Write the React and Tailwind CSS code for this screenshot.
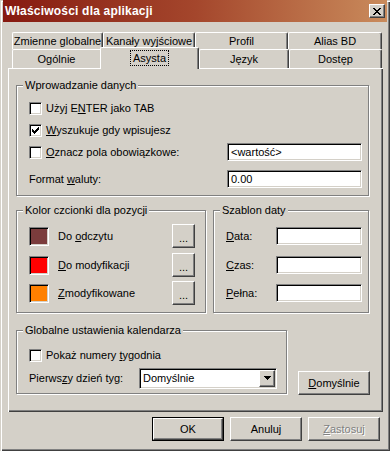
import React from 'react';

const raised =
  'border border-t-white border-l-white border-r-[#404040] border-b-[#404040] shadow-[inset_-1px_-1px_0_#808080]';
const sunken =
  'border border-t-[#808080] border-l-[#808080] border-r-white border-b-white shadow-[inset_1px_1px_0_#000,inset_-1px_-1px_0_#d4d0c8]';

function Check({ checked }) {
  return (
    <span className={`flex h-[13px] w-[13px] shrink-0 items-center justify-center bg-white ${sunken}`}>
      {checked && (
        <svg width="7" height="7" viewBox="0 0 7 7" shapeRendering="crispEdges">
          {[2, 3, 4, 3, 2, 1, 0].map((y, x) => (
            <rect key={x} x={x} y={y} width="1" height="3" fill="#000" />
          ))}
        </svg>
      )}
    </span>
  );
}

function Field({ className = '', children }) {
  return <div className={`flex items-center bg-white pl-[3px] ${sunken} ${className}`}>{children}</div>;
}

function Group({ title, className = '', children }) {
  return (
    <div className={`relative border border-[#808080] shadow-[inset_1px_1px_0_#fff,1px_1px_0_#fff] ${className}`}>
      <span className="absolute -top-[7px] left-[6px] bg-[#d4d0c8] px-[2px] leading-[13px]">{title}</span>
      {children}
    </div>
  );
}

function Button({ className = '', children }) {
  return <div className={`flex items-center justify-center bg-[#d4d0c8] ${raised} ${className}`}>{children}</div>;
}

function TitleBar() {
  return (
    <div className="flex h-[22px] shrink-0 items-center bg-linear-to-r from-[#861810] via-[#a4462c] to-[#c98b5c] pl-[2px] pr-[2px]">
      <span className="text-[12px] font-bold tracking-[0.2px] text-white">Właściwości dla aplikacji</span>
      <Button className="ml-auto h-[14px] w-[16px]">
        <svg width="8" height="7" viewBox="0 0 8 7" shapeRendering="crispEdges">
          {[0, 1, 2, 3, 2, 1, 0].map((v, r) => (
            <g key={r}>
              <rect x={v} y={r} width="2" height="1" fill="#000" />
              <rect x={6 - v} y={r} width="2" height="1" fill="#000" />
            </g>
          ))}
        </svg>
      </Button>
    </div>
  );
}

const tabBase =
  'flex items-center justify-center border-t border-l border-r border-t-white border-l-white border-r-[#404040] shadow-[inset_-1px_0_0_#808080] rounded-t-[2px]';

const backRow = [
  { label: 'Zmienne globalne', w: 'w-[91px]' },
  { label: 'Kanały wyjściowe', w: 'w-[92px]' },
  { label: 'Profil', w: 'w-[93px]' },
  { label: 'Alias BD', w: 'w-[94px]' },
];

function Tabs() {
  return (
    <div className="ml-[4px]">
      <div className="flex">
        {backRow.map((t) => (
          <div key={t.label} className={`h-[17px] ${t.w} ${tabBase}`}>
            {t.label}
          </div>
        ))}
      </div>
      <div className="flex h-[19px] items-start">
        <div className="flex h-[19px] w-[88px] items-center justify-center border-t border-l border-t-white border-l-white rounded-tl-[2px]">
          Ogólnie
        </div>
        <div className={`relative z-10 -mt-[2px] h-[22px] w-[99px] bg-[#d4d0c8] pb-[2px] ${tabBase}`}>
          <span className="border border-dotted border-black px-[2px] py-[1px] leading-[12px]">Asysta</span>
        </div>
        <div className={`h-[19px] w-[90px] ${tabBase}`}>Język</div>
        <div className={`h-[19px] w-[93px] ${tabBase}`}>Dostęp</div>
      </div>
    </div>
  );
}

const colours = [
  { label: <>Do <u>o</u>dczytu</>, bg: 'bg-[#7b3c3c]', mt: 'mt-0' },
  { label: <><u>D</u>o modyfikacji</>, bg: 'bg-[#ff0000]', mt: 'mt-[5px]' },
  { label: <><u>Z</u>modyfikowane</>, bg: 'bg-[#ff8000]', mt: 'mt-[4px]' },
];

const dates = [
  { label: <><u>D</u>ata:</>, mt: 'mt-0' },
  { label: <><u>C</u>zas:</>, mt: 'mt-[5px]' },
  { label: <><u>P</u>ełna:</>, mt: 'mt-[4px]' },
];

function Panel() {
  return (
    <div className="h-[344px] px-[8px] pt-[17px] shadow-[inset_1px_1px_0_#fff,inset_-1px_-1px_0_#404040,inset_-2px_-2px_0_#808080]">
      <Group title="Wprowadzanie danych" className="h-[111px] w-[353px] pl-[12px] pr-[6px] pt-[11px]">
        <div className="flex h-[22px] items-center gap-[4px]">
          <Check />
          <span>
            Użyj E<u>N</u>TER jako TAB
          </span>
        </div>
        <div className="flex h-[22px] items-center gap-[4px]">
          <Check checked />
          <span>
            <u>W</u>yszukuje gdy wpisujesz
          </span>
        </div>
        <div className="flex h-[22px] items-center gap-[4px]">
          <Check />
          <span>
            <u>O</u>znacz pola obowiązkowe:
          </span>
          <Field className="ml-auto h-[18px] w-[135px]">&lt;wartość&gt;</Field>
        </div>
        <div className="mt-[5px] flex h-[22px] items-center">
          <span>
            Format <u>w</u>aluty:
          </span>
          <Field className="ml-auto h-[18px] w-[135px]">0.00</Field>
        </div>
      </Group>

      <div className="mt-[14px] flex gap-[7px]">
        <Group title="Kolor czcionki dla pozycji" className="h-[103px] w-[190px] pl-[12px] pr-[10px] pt-[13px]">
          {colours.map((c, i) => (
            <div key={i} className={`flex h-[24px] items-center ${c.mt}`}>
              <span className={`h-[19px] w-[20px] shrink-0 ${c.bg} ${sunken}`} />
              <span className="ml-[9px]">{c.label}</span>
              <Button className="ml-auto h-[24px] w-[23px] items-end pb-[5px] leading-[8px]">...</Button>
            </div>
          ))}
        </Group>
        <Group title="Szablon daty" className="h-[103px] w-[156px] pl-[12px] pr-[6px] pt-[13px]">
          {dates.map((d, i) => (
            <div key={i} className={`flex h-[24px] items-center ${d.mt}`}>
              <span>{d.label}</span>
              <Field className="ml-auto h-[18px] w-[86px]" />
            </div>
          ))}
        </Group>
      </div>

      <div className="mt-[17px] flex items-end gap-[11px]">
        <Group title="Globalne ustawienia kalendarza" className="h-[64px] w-[271px] pl-[12px] pr-[9px] pt-[13px]">
          <div className="flex h-[22px] items-center gap-[4px]">
            <Check />
            <span>
              Pokaż numery <u>t</u>ygodnia
            </span>
          </div>
          <div className="mt-[1px] flex h-[22px] items-center">
            <span className="w-[110px]">
              Pierws<u>z</u>y dzień tyg:
            </span>
            <div className={`flex h-[21px] w-[138px] items-center bg-white pl-[3px] ${sunken}`}>
              <span>Domyślnie</span>
              <div className={`ml-auto mr-[1px] flex h-[17px] w-[16px] items-center justify-center bg-[#d4d0c8] ${raised}`}>
                <svg width="7" height="4" viewBox="0 0 7 4" shapeRendering="crispEdges">
                  <rect x="0" y="0" width="7" height="1" fill="#000" />
                  <rect x="1" y="1" width="5" height="1" fill="#000" />
                  <rect x="2" y="2" width="3" height="1" fill="#000" />
                  <rect x="3" y="3" width="1" height="1" fill="#000" />
                </svg>
              </div>
            </div>
          </div>
        </Group>
        <Button className="-mb-[1px] h-[24px] w-[72px]">
          <span>
            <u>D</u>omyślnie
          </span>
        </Button>
      </div>
    </div>
  );
}

function Buttons() {
  return (
    <div className="mt-[5px] flex justify-end gap-[6px] pr-[7px]">
      <div className="h-[24px] w-[72px] border border-black">
        <Button className="h-full w-full">OK</Button>
      </div>
      <Button className="h-[24px] w-[72px]">Anuluj</Button>
      <Button className="h-[24px] w-[72px] text-[#808080] [text-shadow:1px_1px_0_#fff]">
        <span>
          <u>Z</u>astosuj
        </span>
      </Button>
    </div>
  );
}

export default function App() {
  return (
    <div className="flex h-[451px] w-[390px] flex-col overflow-hidden bg-[#d4d0c8] px-[3px] font-['Liberation_Sans',Arial,sans-serif] text-[11px] leading-[13px] text-black shadow-[inset_1px_1px_0_#d4d0c8,inset_2px_2px_0_#fff,inset_-1px_-1px_0_#404040,inset_-2px_-2px_0_#808080]">
      <TitleBar />
      <div className="ml-[5px] mt-[10px] w-[375px]">
        <Tabs />
        <Panel />
      </div>
      <Buttons />
    </div>
  );
}
